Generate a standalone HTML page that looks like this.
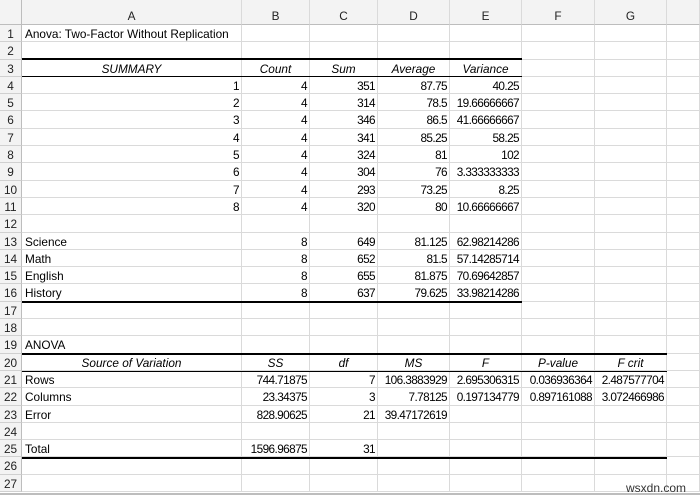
<!DOCTYPE html><html><head><style>
*{box-sizing:border-box;margin:0;padding:0}
body{width:700px;height:499px;overflow:hidden;background:#fff;font-family:"Liberation Sans",Arial,sans-serif;font-size:11.8px;color:#000;position:relative}
.r{display:flex;height:17.3px}
.c{height:100%;border-right:1px solid #dadada;border-bottom:1px solid #dadada;white-space:nowrap;overflow:visible;line-height:18px;padding:0 2px;text-align:right;letter-spacing:-0.6px}
.c:nth-child(1){width:22px;background:#f3f3f3;border-right:1px solid #bdbdbd;border-bottom:1px solid #d0d0d0;text-align:center;padding:0;color:#222;letter-spacing:0}
.c:nth-child(2){width:220px}.c:nth-child(3){width:68px}.c:nth-child(4){width:68px}.c:nth-child(5){width:72px}.c:nth-child(6){width:72px}.c:nth-child(7){width:73px}.c:nth-child(8){width:72px}.c:nth-child(9){width:33px}
.h{height:25px}.h .c{background:#f3f3f3;text-align:center;line-height:32px;border-bottom:1px solid #bdbdbd;color:#222;letter-spacing:0}
.l{text-align:left;letter-spacing:0;padding-left:3px}.i{font-style:italic;text-align:center;letter-spacing:0}
.line{position:absolute;background:#000;left:22px}
</style></head><body>
<div class="r h"><div class="c"></div><div class="c">A</div><div class="c">B</div><div class="c">C</div><div class="c">D</div><div class="c">E</div><div class="c">F</div><div class="c">G</div><div class="c"></div></div>
<div class="r"><div class="c">1</div><div class="c l" style="overflow:visible">Anova: Two-Factor Without Replication</div><div class="c"></div><div class="c"></div><div class="c"></div><div class="c"></div><div class="c"></div><div class="c"></div><div class="c"></div></div>
<div class="r"><div class="c">2</div><div class="c"></div><div class="c"></div><div class="c"></div><div class="c"></div><div class="c"></div><div class="c"></div><div class="c"></div><div class="c"></div></div>
<div class="r"><div class="c">3</div><div class="c i">SUMMARY</div><div class="c i">Count</div><div class="c i">Sum</div><div class="c i">Average</div><div class="c i">Variance</div><div class="c"></div><div class="c"></div><div class="c"></div></div>
<div class="r"><div class="c">4</div><div class="c">1</div><div class="c">4</div><div class="c">351</div><div class="c">87.75</div><div class="c">40.25</div><div class="c"></div><div class="c"></div><div class="c"></div></div>
<div class="r"><div class="c">5</div><div class="c">2</div><div class="c">4</div><div class="c">314</div><div class="c">78.5</div><div class="c">19.66666667</div><div class="c"></div><div class="c"></div><div class="c"></div></div>
<div class="r"><div class="c">6</div><div class="c">3</div><div class="c">4</div><div class="c">346</div><div class="c">86.5</div><div class="c">41.66666667</div><div class="c"></div><div class="c"></div><div class="c"></div></div>
<div class="r"><div class="c">7</div><div class="c">4</div><div class="c">4</div><div class="c">341</div><div class="c">85.25</div><div class="c">58.25</div><div class="c"></div><div class="c"></div><div class="c"></div></div>
<div class="r"><div class="c">8</div><div class="c">5</div><div class="c">4</div><div class="c">324</div><div class="c">81</div><div class="c">102</div><div class="c"></div><div class="c"></div><div class="c"></div></div>
<div class="r"><div class="c">9</div><div class="c">6</div><div class="c">4</div><div class="c">304</div><div class="c">76</div><div class="c">3.333333333</div><div class="c"></div><div class="c"></div><div class="c"></div></div>
<div class="r"><div class="c">10</div><div class="c">7</div><div class="c">4</div><div class="c">293</div><div class="c">73.25</div><div class="c">8.25</div><div class="c"></div><div class="c"></div><div class="c"></div></div>
<div class="r"><div class="c">11</div><div class="c">8</div><div class="c">4</div><div class="c">320</div><div class="c">80</div><div class="c">10.66666667</div><div class="c"></div><div class="c"></div><div class="c"></div></div>
<div class="r"><div class="c">12</div><div class="c"></div><div class="c"></div><div class="c"></div><div class="c"></div><div class="c"></div><div class="c"></div><div class="c"></div><div class="c"></div></div>
<div class="r"><div class="c">13</div><div class="c l">Science</div><div class="c">8</div><div class="c">649</div><div class="c">81.125</div><div class="c">62.98214286</div><div class="c"></div><div class="c"></div><div class="c"></div></div>
<div class="r"><div class="c">14</div><div class="c l">Math</div><div class="c">8</div><div class="c">652</div><div class="c">81.5</div><div class="c">57.14285714</div><div class="c"></div><div class="c"></div><div class="c"></div></div>
<div class="r"><div class="c">15</div><div class="c l">English</div><div class="c">8</div><div class="c">655</div><div class="c">81.875</div><div class="c">70.69642857</div><div class="c"></div><div class="c"></div><div class="c"></div></div>
<div class="r"><div class="c">16</div><div class="c l">History</div><div class="c">8</div><div class="c">637</div><div class="c">79.625</div><div class="c">33.98214286</div><div class="c"></div><div class="c"></div><div class="c"></div></div>
<div class="r"><div class="c">17</div><div class="c"></div><div class="c"></div><div class="c"></div><div class="c"></div><div class="c"></div><div class="c"></div><div class="c"></div><div class="c"></div></div>
<div class="r"><div class="c">18</div><div class="c"></div><div class="c"></div><div class="c"></div><div class="c"></div><div class="c"></div><div class="c"></div><div class="c"></div><div class="c"></div></div>
<div class="r"><div class="c">19</div><div class="c l">ANOVA</div><div class="c"></div><div class="c"></div><div class="c"></div><div class="c"></div><div class="c"></div><div class="c"></div><div class="c"></div></div>
<div class="r"><div class="c">20</div><div class="c i">Source of Variation</div><div class="c i">SS</div><div class="c i">df</div><div class="c i">MS</div><div class="c i">F</div><div class="c i">P-value</div><div class="c i">F crit</div><div class="c"></div></div>
<div class="r"><div class="c">21</div><div class="c l">Rows</div><div class="c">744.71875</div><div class="c">7</div><div class="c">106.3883929</div><div class="c">2.695306315</div><div class="c">0.036936364</div><div class="c">2.487577704</div><div class="c"></div></div>
<div class="r"><div class="c">22</div><div class="c l">Columns</div><div class="c">23.34375</div><div class="c">3</div><div class="c">7.78125</div><div class="c">0.197134779</div><div class="c">0.897161088</div><div class="c">3.072466986</div><div class="c"></div></div>
<div class="r"><div class="c">23</div><div class="c l">Error</div><div class="c">828.90625</div><div class="c">21</div><div class="c">39.47172619</div><div class="c"></div><div class="c"></div><div class="c"></div><div class="c"></div></div>
<div class="r"><div class="c">24</div><div class="c"></div><div class="c"></div><div class="c"></div><div class="c"></div><div class="c"></div><div class="c"></div><div class="c"></div><div class="c"></div></div>
<div class="r"><div class="c">25</div><div class="c l">Total</div><div class="c">1596.96875</div><div class="c">31</div><div class="c"></div><div class="c"></div><div class="c"></div><div class="c"></div><div class="c"></div></div>
<div class="r"><div class="c">26</div><div class="c"></div><div class="c"></div><div class="c"></div><div class="c"></div><div class="c"></div><div class="c"></div><div class="c"></div><div class="c"></div></div>
<div class="r"><div class="c">27</div><div class="c"></div><div class="c"></div><div class="c"></div><div class="c"></div><div class="c"></div><div class="c"></div><div class="c"></div><div class="c"></div></div>
<div class="line" style="top:58px;width:500px;height:2px"></div>
<div class="line" style="top:76px;width:500px;height:1px"></div>
<div class="line" style="top:301px;width:500px;height:2px"></div>
<div class="line" style="top:353px;width:645px;height:2px"></div>
<div class="line" style="top:371px;width:645px;height:1px"></div>
<div class="line" style="top:457px;width:645px;height:2px"></div>
<div style="position:absolute;left:0;top:493px;width:700px;height:2px;background:#bdbdbd"></div>
<div style="position:absolute;left:626px;top:481px;font-size:12px;color:#333">wsxdn.com</div>
</body></html>
